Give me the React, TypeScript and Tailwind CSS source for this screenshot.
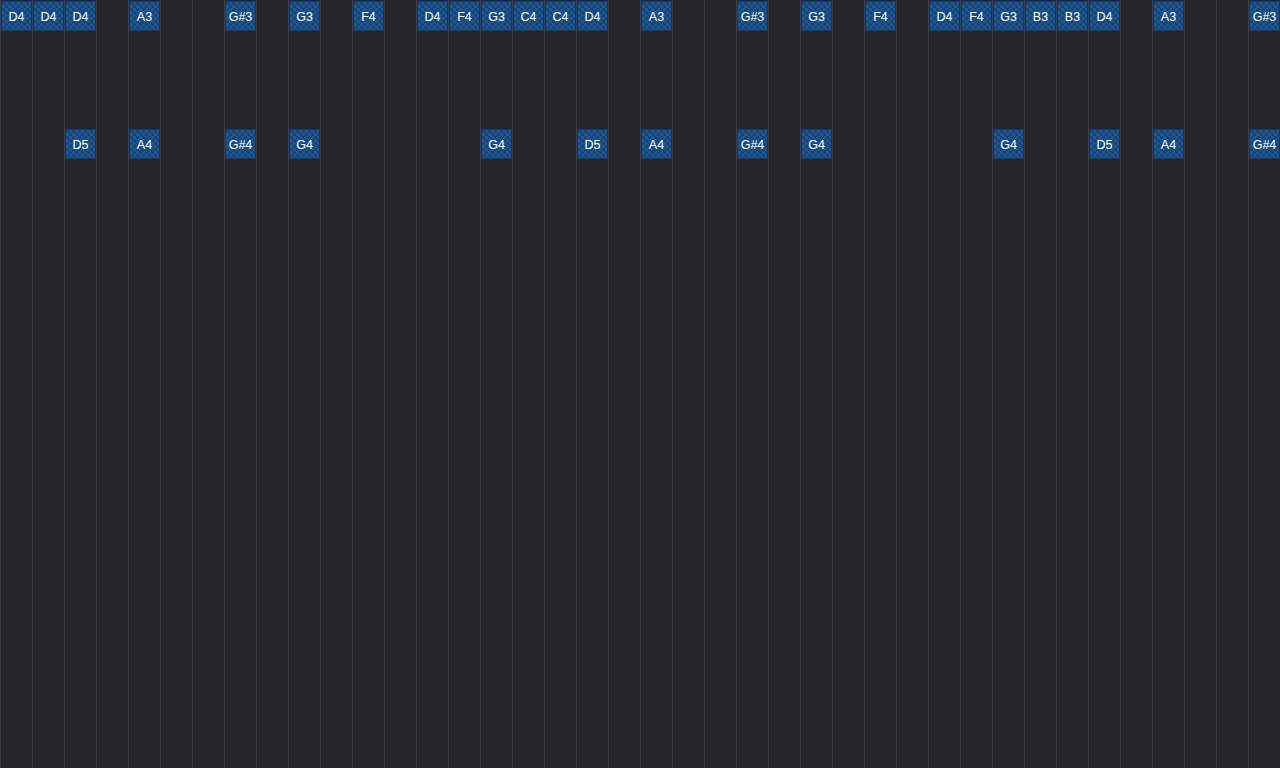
const COLS = 40;
const SLOTS = 24;

// note lanes: slot index -> { column: label }
const lanes: Record<number, Record<number, string>> = {
  0: {
    0: 'D4', 1: 'D4', 2: 'D4', 4: 'A3', 7: 'G#3', 9: 'G3', 11: 'F4', 13: 'D4', 14: 'F4',
    15: 'G3', 16: 'C4', 17: 'C4', 18: 'D4', 20: 'A3', 23: 'G#3', 25: 'G3', 27: 'F4',
    29: 'D4', 30: 'F4', 31: 'G3', 32: 'B3', 33: 'B3', 34: 'D4', 36: 'A3', 39: 'G#3',
  },
  4: {
    2: 'D5', 4: 'A4', 7: 'G#4', 9: 'G4', 15: 'G4', 18: 'D5', 20: 'A4', 23: 'G#4',
    25: 'G4', 31: 'G4', 34: 'D5', 36: 'A4', 39: 'G#4',
  },
};

function Note({ label }: { label: string }) {
  return (
    <div className="h-[30px] w-[31px] border border-[#0f3a68] bg-[#1b4c85] bg-[repeating-conic-gradient(#1f548f_0_25%,#184478_0_50%)] bg-[length:6px_6px] flex items-center justify-center pt-[3px] text-[12.5px] font-normal text-white leading-none">
      {label}
    </div>
  );
}

export default function App() {
  return (
    <div className="flex h-[768px] w-[1280px] overflow-hidden bg-[#262628] font-['Liberation_Sans',Arial,sans-serif]">
      {Array.from({ length: COLS }).map((_, col) => (
        <div key={col} className="flex w-8 shrink-0 flex-col border-l border-[#3d3d40]">
          {Array.from({ length: SLOTS }).map((_, slot) => {
            const label = lanes[slot]?.[col];
            return (
              <div key={slot} className="h-8 shrink-0 pt-px">
                {label && <Note label={label} />}
              </div>
            );
          })}
        </div>
      ))}
    </div>
  );
}
